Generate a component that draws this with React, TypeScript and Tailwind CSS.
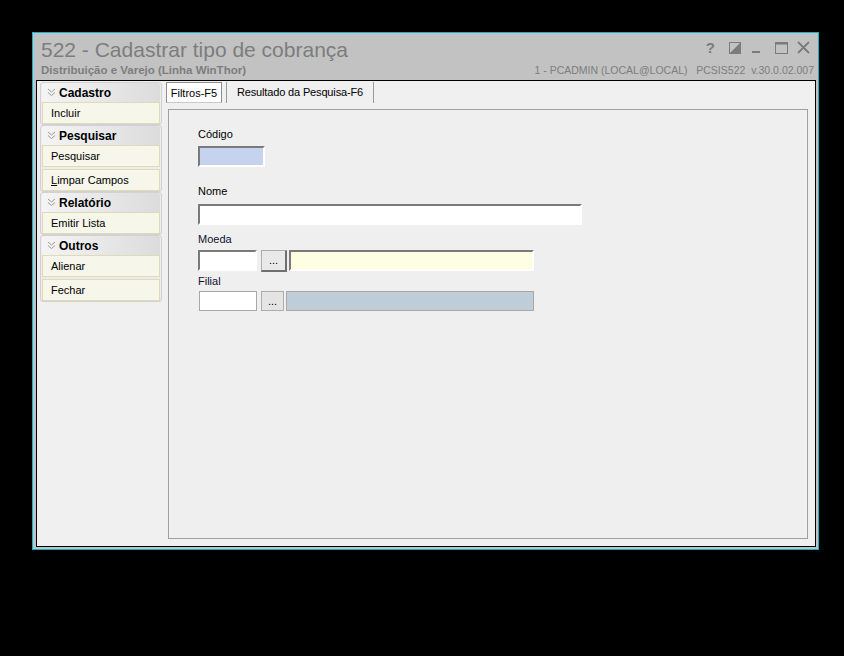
import React from 'react';

const font = { fontFamily: '"Liberation Sans", Arial, sans-serif' };

type Group = { title: string; items: { label: string; accel?: string }[] };

const groups: Group[] = [
  { title: 'Cadastro', items: [{ label: 'Incluir' }] },
  { title: 'Pesquisar', items: [{ label: 'Pesquisar' }, { label: 'Limpar Campos', accel: 'L' }] },
  { title: 'Relatório', items: [{ label: 'Emitir Lista' }] },
  { title: 'Outros', items: [{ label: 'Alienar' }, { label: 'Fechar' }] },
];

const Chevrons: React.FC = () => (
  <svg width="9" height="9" viewBox="0 0 9 9" className="shrink-0">
    <path d="M1 1 L4.5 4 L8 1 M1 4.5 L4.5 7.5 L8 4.5" fill="none" stroke="#9a9a9a" strokeWidth="1" />
  </svg>
);

const SideGroup: React.FC<{ group: Group }> = ({ group }) => (
  <div className="rounded-[3px] border border-[#d2d2d2] bg-[#ececec] px-[1px]">
    <div className="flex h-[19px] items-center gap-[3px] rounded-t-[3px] bg-gradient-to-r from-[#f4f4f4] to-[#dcdcdc] pl-[5px]">
      <Chevrons />
      <span className="text-[12px] font-bold text-black">{group.title}</span>
    </div>
    <div className="flex flex-col gap-[2px]">
      {group.items.map((it) => (
        <div
          key={it.label}
          className="flex h-[22px] items-center border border-[#dedbb8] bg-[#f7f6ea] pl-[8px] text-[11px] text-black"
        >
          {it.accel ? (
            <span>
              <span className="underline">{it.accel}</span>
              {it.label.slice(1)}
            </span>
          ) : (
            it.label
          )}
        </div>
      ))}
    </div>
  </div>
);

// sunken 3D edit box, or a flat one for the read-only row
const Edit: React.FC<{ w: string; bg: string; flat?: boolean }> = ({ w, bg, flat }) => (
  <div
    className={`${w} ${bg} ${
      flat
        ? 'h-[20px] border border-[#a8a8a8]'
        : 'h-[21px] border-[2px] border-t-[#7a7a7a] border-l-[#7a7a7a] border-b-white border-r-white'
    }`}
  />
);

const Dots: React.FC<{ pressed?: boolean }> = ({ pressed }) => (
  <div
    className={`flex items-center justify-center text-[11px] text-black ${
      pressed
        ? 'h-[22px] w-[26px] border border-[#adadad] border-b-[2px] border-r-[2px] border-b-[#6f6f6f] border-r-[#6f6f6f] bg-[#e9e9e9]'
        : 'h-[20px] w-[23px] border border-[#adadad] bg-[#e4e4e4]'
    }`}
  >
    ...
  </div>
);

const TitleIcons: React.FC = () => (
  <div className="flex items-center text-[#7b7b7b]">
    <span className="text-[15px] font-bold leading-none">?</span>
    <svg width="12" height="12" viewBox="0 0 12 12" className="ml-[14px]">
      <rect x="0.5" y="0.5" width="11" height="11" fill="none" stroke="#7b7b7b" />
      <path d="M1 11 L11 1 L11 11 Z" fill="#7b7b7b" />
    </svg>
    <svg width="9" height="12" viewBox="0 0 9 12" className="ml-[11px]">
      <rect x="0" y="9" width="8" height="2" fill="#7b7b7b" />
    </svg>
    <svg width="13" height="12" viewBox="0 0 13 12" className="ml-[14px]">
      <rect x="0.5" y="0.5" width="12" height="11" fill="none" stroke="#7b7b7b" />
      <rect x="0.5" y="0.5" width="12" height="2" fill="#7b7b7b" />
    </svg>
    <svg width="13" height="13" viewBox="0 0 13 13" className="ml-[9px] mr-[8px]">
      <path d="M1 1 L12 12 M12 1 L1 12" stroke="#7b7b7b" strokeWidth="1.8" />
    </svg>
  </div>
);

const App: React.FC = () => {
  return (
    <div className="h-[656px] w-[844px] bg-black pl-[32px] pt-[32px]" style={font}>
      <div className="flex h-[518px] w-[787px] flex-col border border-[#0fb4cc] bg-[#c2c2c2]">
        {/* title bar */}
        <div className="flex h-[47px] shrink-0 justify-between">
          <div className="pl-[8px] pt-[5px]">
            <div className="text-[21px] leading-[24px] text-[#7d7d7d]">522 - Cadastrar tipo de cobrança</div>
            <div className="mt-[2px] text-[11.5px] font-bold leading-[13px] text-[#7d7d7d]">
              Distribuição e Varejo (Linha WinThor)
            </div>
          </div>
          <div className="flex flex-col items-end pt-[7px]">
            <TitleIcons />
            <div className="mt-[9px] pr-[4px] text-[10.5px] leading-[13px] text-[#7d7d7d]">
              1 - PCADMIN (LOCAL@LOCAL)&nbsp;&nbsp;&nbsp;PCSIS522&nbsp;&nbsp;v.30.0.02.007
            </div>
          </div>
        </div>

        {/* client area */}
        <div className="mb-[2px] ml-[3px] mr-[2px] flex flex-1 border border-black bg-[#f0f0f0]">
          <div className="flex w-[126px] shrink-0 flex-col pl-[3px] pt-[1px]">
            {groups.map((g) => (
              <div key={g.title} className="w-[122px]">
                <SideGroup group={g} />
              </div>
            ))}
          </div>

          <div className="flex flex-1 flex-col pb-[7px] pr-[7px] pt-[1px]">
            {/* tab strip */}
            <div className="flex h-[21px] items-stretch pl-[3px] text-[11px]">
              <div className="flex w-[56px] items-center justify-center border border-[#8e8e8e] border-b-[#c8c8c8] bg-white pt-[1px]">
                Filtros-F5
              </div>
              <div className="ml-[4px] w-px bg-[#9a9a9a]" />
              <div className="flex w-[146px] items-center justify-center tracking-[-0.15px]">
                Resultado da Pesquisa-F6
              </div>
              <div className="w-px bg-[#9a9a9a]" />
            </div>

            {/* filter page */}
            <div className="ml-[5px] mt-[6px] flex-1 border border-[#a0a0a0] bg-[#efefef] pl-[29px] pt-[17px] text-[11px]">
              <div className="leading-[14px] text-black">Código</div>
              <div className="mt-[5px]">
                <Edit w="w-[67px]" bg="bg-[#c5d3ef]" />
              </div>

              <div className="mt-[17px] leading-[14px] text-black">Nome</div>
              <div className="mt-[6px]">
                <Edit w="w-[384px]" bg="bg-white" />
              </div>

              <div className="mt-[7px] leading-[14px] text-[#111133]">Moeda</div>
              <div className="mt-[4px] flex items-start gap-[2px]">
                <Edit w="w-[59px]" bg="bg-white" />
                <div className="ml-[2px]">
                  <Dots pressed />
                </div>
                <Edit w="w-[245px]" bg="bg-[#fefee2]" />
              </div>

              <div className="mt-[2px] leading-[14px] text-[#111133]">Filial</div>
              <div className="mt-[3px] flex items-start gap-[2px] pl-[1px]">
                <Edit w="w-[58px]" bg="bg-white" flat />
                <div className="ml-[2px]">
                  <Dots />
                </div>
                <Edit w="w-[248px]" bg="bg-[#bfcdd9]" flat />
              </div>
            </div>
          </div>
        </div>
      </div>
    </div>
  );
};

export default App;
